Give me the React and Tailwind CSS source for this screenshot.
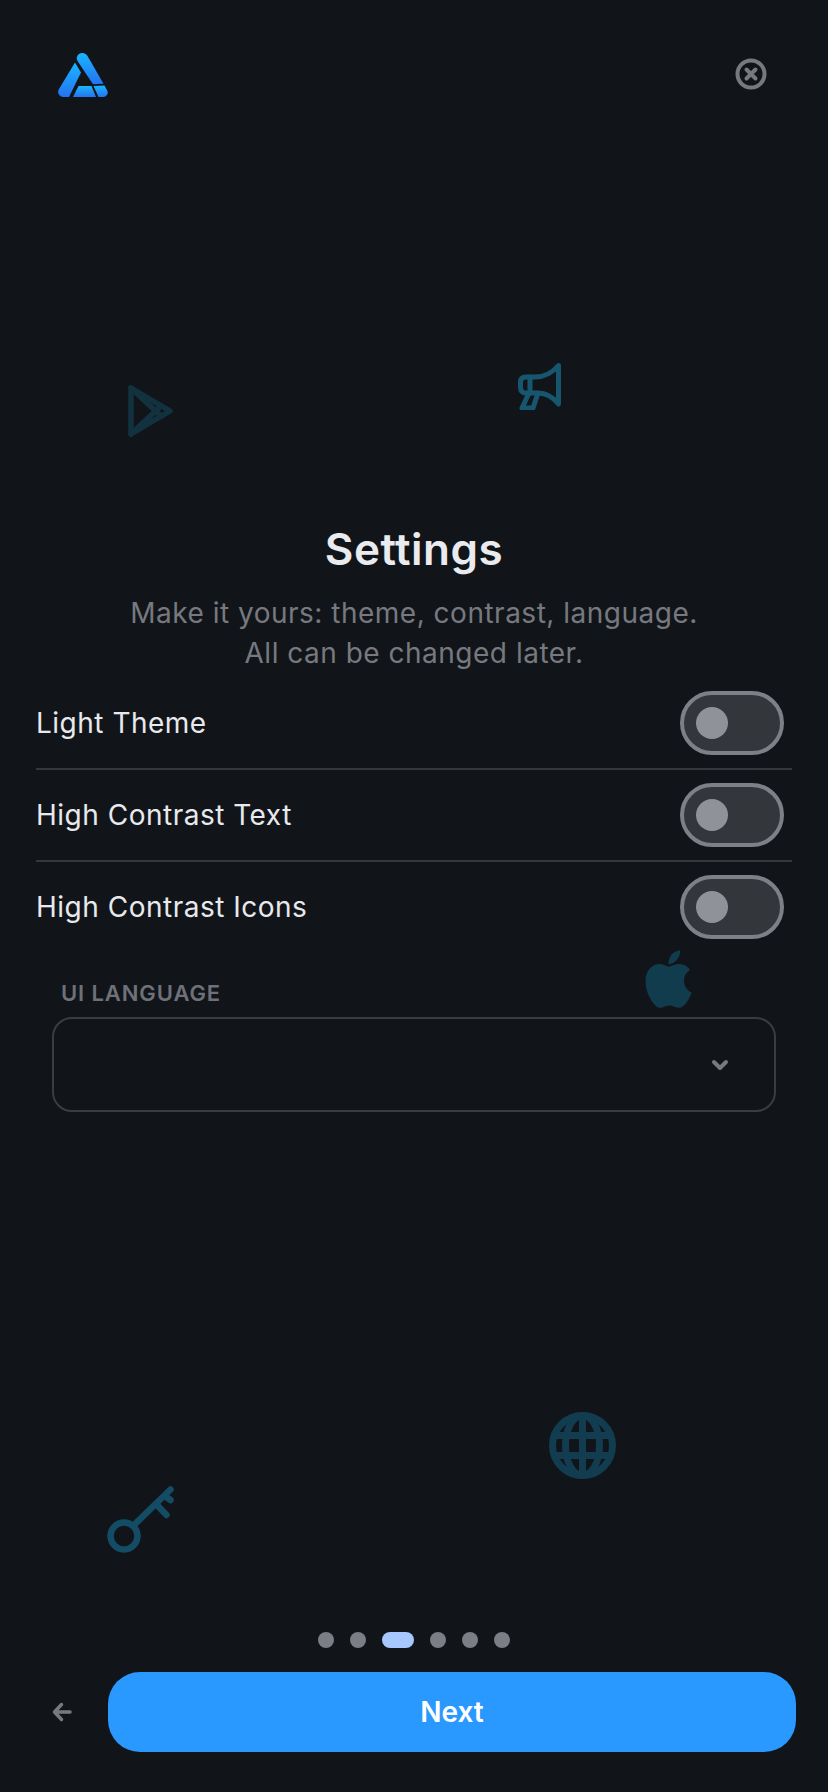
import React from "react";
import { FaApple } from "react-icons/fa";

const settings = ["Light Theme", "High Contrast Text", "High Contrast Icons"];
const steps = [0, 1, 2, 3, 4, 5];

const Logo = () => (
  <svg width="50" height="44" viewBox="0 0 50 44">
    <defs>
      <linearGradient id="logoFill" x1="0" y1="0" x2="0" y2="1">
        <stop offset="0" stopColor="#18b6ff" />
        <stop offset="1" stopColor="#2672f0" />
      </linearGradient>
    </defs>
    <g fill="url(#logoFill)">
      <path d="M19.5 8 C18 5.5 19 2.5 21 1 C24 -0.8 27.5 0 29.5 3 L45.5 30.8 L35 31.2 Z" />
      <path d="M17 9.5 L23 19.5 L11 44 L5 44 C1.5 44 -1 40 0.7 36.5 Z" />
      <path d="M15 44 L20.5 33 L33.5 33 L38 44 Z" />
      <path d="M35.5 33 L46.5 32.6 L49.2 37.5 C50.8 40.5 48.5 44 45 44 L40.5 44 Z" />
    </g>
  </svg>
);

const PlayOutline = () => (
  <svg width="45" height="52" viewBox="0 0 45 52" fill="none" stroke="#13323f" strokeWidth="5.5" strokeLinejoin="round" strokeLinecap="round">
    <path d="M3 3 L42 26 L3 49 Z" />
    <path d="M3 3 L33 31 M3 49 L33 21" />
  </svg>
);

const MegaphoneOutline = () => (
  <svg width="43" height="47" viewBox="0 0 43 47" fill="none" stroke="#17566f" strokeWidth="5" strokeLinejoin="round" strokeLinecap="round">
    <path d="M40.5 2.5 C35 9 28 14 17 14 H8 C4 14 2.5 16 2.5 19 V24 C2.5 28 4 30 8 30 H20 C28 30 35 34 40.5 41 Z" />
    <path d="M12 14 V30" />
    <path d="M11 30 L4 45 H15 L20 30" />
  </svg>
);

const KeyOutline = () => (
  <svg width="67" height="67" viewBox="0 0 67 67" fill="none" stroke="#134c64" strokeWidth="6.5" strokeLinecap="round">
    <circle cx="17" cy="50" r="13.5" />
    <path d="M27 39 L63.5 3.5" />
    <path d="M50 19 L59.5 29" />
    <path d="M58 10 L63.5 14" />
  </svg>
);

const GlobeOutline = () => (
  <svg width="67" height="67" viewBox="0 0 67 67" fill="none" stroke="#123c50" strokeWidth="7">
    <circle cx="33.5" cy="33.5" r="30" />
    <ellipse cx="33.5" cy="33.5" rx="17" ry="30" />
    <path d="M33.5 3 V64 M4 23.5 H63 M4 43.5 H63" />
  </svg>
);

const Toggle = () => (
  <div className="flex h-16 w-[104px] items-center rounded-full border-4 border-[#7d8087] bg-[#33363b] pl-3">
    <div className="h-8 w-8 rounded-full bg-[#8f9299]" />
  </div>
);

const App = () => {
  return (
    <div className="relative flex h-[1792px] w-[828px] flex-col overflow-hidden bg-[#11151a] font-['Inter',sans-serif]">
      <div className="absolute left-[128px] top-[385px]"><PlayOutline /></div>
      <div className="absolute left-[518px] top-[363px]"><MegaphoneOutline /></div>
      <div className="absolute left-[645px] top-[946px]">
        <FaApple className="h-[66px] w-[47px] text-[#113c4e]" preserveAspectRatio="none" />
      </div>
      <div className="absolute left-[107px] top-[1486px]"><KeyOutline /></div>
      <div className="absolute left-[549px] top-[1412px]"><GlobeOutline /></div>

      <div className="flex items-start justify-between pl-[58px] pr-[61px] pt-[53px]">
        <Logo />
        <svg className="mt-[5px]" width="32" height="32" viewBox="0 0 32 32" fill="none" stroke="#77797f" strokeWidth="4" strokeLinecap="round">
          <circle cx="16" cy="16" r="13.5" />
          <path d="M11.5 11.5 L20.5 20.5 M20.5 11.5 L11.5 20.5" />
        </svg>
      </div>

      <h1 className="mt-[424px] text-center text-[44px] font-semibold leading-[56px] tracking-[0.5px] text-[#eaebee]">Settings</h1>
      <p className="mt-[16px] text-center text-[28px] leading-[40px] tracking-[0.5px] text-[#77797f]">
        Make it yours: theme, contrast, language.
        <br />
        All can be changed later.
      </p>

      <div className="ml-9 mt-[5px] w-[756px]">
        {settings.map((label, i) => (
          <div
            key={label}
            className={`flex h-[92px] items-center justify-between border-b-2 pr-2 ${i < settings.length - 1 ? "border-[#34373c]" : "border-transparent"}`}
          >
            <span className="text-[28px] tracking-[0.5px] text-[#e8e9ec]">{label}</span>
            <Toggle />
          </div>
        ))}
      </div>

      <div className="ml-[52px] mt-[23px] w-[724px]">
        <div className="ml-[9px] text-[22px] font-semibold leading-[32px] tracking-[0.9px] text-[#6f7178]">UI LANGUAGE</div>
        <div className="mt-[8px] flex h-[95px] items-center justify-end rounded-[20px] border-2 border-[#3a3c42] pr-[45px]">
          <svg width="18" height="12" viewBox="0 0 18 12" fill="none" stroke="#77797f" strokeWidth="4" strokeLinecap="round" strokeLinejoin="round">
            <path d="M3 3 L9 9 L15 3" />
          </svg>
        </div>
      </div>

      <div className="mt-auto flex flex-col pb-10">
        <div className="ml-[318px] flex gap-4">
          {steps.map((s) => (
            <div key={s} className={s === 2 ? "h-4 w-8 rounded-lg bg-[#a6c8ff]" : "h-4 w-4 rounded-full bg-[#7b7e84]"} />
          ))}
        </div>
        <div className="mt-6 flex items-center pl-[52px] pr-8">
          <svg width="20" height="20" viewBox="0 0 20 20" fill="none" stroke="#77797f" strokeWidth="3.5" strokeLinecap="round" strokeLinejoin="round">
            <path d="M18 10 H3 M9.5 2.5 L2.5 10 L9.5 17.5" />
          </svg>
          <button className="ml-9 h-20 flex-1 rounded-[32px] bg-[#2998ff] text-[28px] font-semibold text-white">Next</button>
        </div>
      </div>
    </div>
  );
};

export default App;
